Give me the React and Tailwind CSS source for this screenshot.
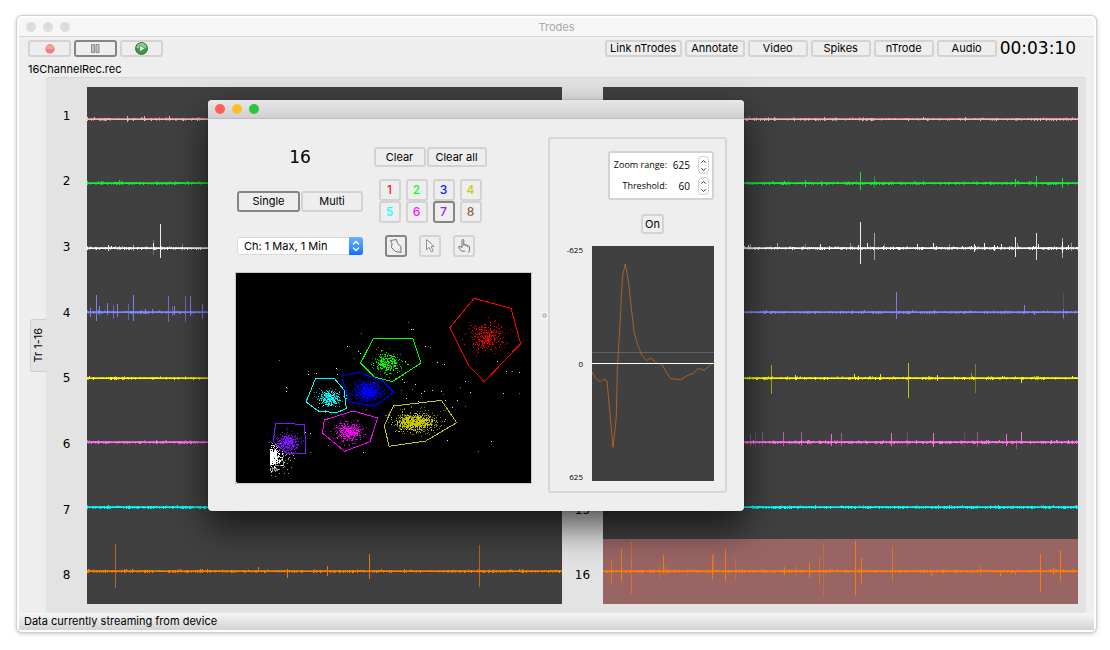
import React from 'react';

const CHANNEL_COLORS = ['#ffb4af', '#14f032', '#ffffff', '#8287ff', '#ffff00', '#ff73eb', '#00ffff', '#ff7d00'];

// each spike is [x, up, down, opacity]
const LEFT_SPIKES = [
  [[40, 3, 3], [57, 3, 2], [82, 3, 2], [110, 2, 2, 0.5]],
  [[14, 2, 2], [32, 3, 2]],
  [[21, 3, 3], [46, 3, 3, 0.6], [66, 8, 7, 0.3], [66, 5, 2], [73, 24, 10], [95, 4, 3, 0.4]],
  [
    [3, 4, 5], [9, 17, 9], [12, 6, 3], [20, 9, 3], [26, 7, 7, 0.7], [30, 8, 5], [41, 8, 8, 0.6], [46, 17, 9],
    [58, 3, 2], [65, 3, 2], [81, 16, 10, 0.8], [85, 6, 4, 0.5], [87, 6, 3], [98, 16, 10, 0.7], [103, 16, 4], [115, 8, 7],
  ],
  [],
  [],
  [],
  [[28, 27, 17, 0.7], [171, 4, 1], [200, 1, 7], [240, 5, 5], [282, 17, 8], [392, 26, 16, 0.7]],
];

const RIGHT_SPIKES = [
  [[146, 3, 1, 0.5], [221, 2, 2]],
  [[202, 3, 4], [218, 2, 3], [257, 11, 7], [271, 7, 5, 0.5], [412, 4, 4], [433, 7, 4], [459, 5, 5]],
  [
    [145, 3, 1], [147, 4, 2, 0.6], [174, 5, 2, 0.6], [202, 4, 1, 0.4], [217, 4, 1], [247, 5, 2, 0.5], [255, 3, 2],
    [257, 26, 16], [264, 5, 1], [271, 15, 12, 0.6], [281, 4, 2, 0.4], [314, 4, 1], [330, 5, 1], [346, 4, 1, 0.4],
    [371, 4, 4], [381, 5, 2], [391, 3, 3], [398, 4, 1], [412, 11, 9], [414, 5, 1, 0.5], [433, 15, 12, 0.9],
    [435, 4, 1], [459, 10, 10, 0.6], [459, 6, 5], [465, 3, 2], [468, 5, 3, 0.5],
  ],
  [[293, 20, 7], [421, 7, 2], [431, 1, 3], [460, 20, 8, 0.25], [460, 3, 6]],
  [
    [168, 13, 16, 0.6], [192, 3, 2], [251, 4, 1], [277, 4, 2], [305, 15, 20, 0.75], [334, 3, 3],
    [368, 5, 2, 0.5], [372, 14, 15, 0.35], [418, 1, 5],
  ],
  [
    [147, 8, 4, 0.5], [152, 9, 4, 0.3], [159, 10, 3, 0.5], [180, 10, 4, 0.7], [198, 10, 4, 0.6], [228, 8, 4],
    [238, 9, 4, 0.6], [288, 9, 4], [304, 10, 5, 0.3], [330, 9, 5], [361, 10, 5, 0.2], [374, 10, 5, 0.5],
    [403, 8, 4], [413, 2, 7, 0.5], [418, 10, 1],
  ],
  [],
  [
    [8, 11, 14, 0.8], [18, 23, 10], [28, 29, 23, 0.6], [56, 5, 7, 0.5], [60, 16, 3], [62, 5, 4, 0.5], [109, 16, 8],
    [110, 18, 3, 0.5], [122, 22, 10], [132, 13, 10, 0.4], [181, 4, 4], [193, 6, 7, 0.4], [206, 8, 7], [216, 14, 14, 0.7],
    [220, 29, 25, 0.4], [252, 30, 24], [258, 13, 14], [289, 24, 10, 0.8], [328, 0, 5], [377, 6, 6, 0.6],
    [397, 0, 5], [412, 0, 4], [437, 17, 21], [450, 3, 4], [457, 21, 10],
  ],
];

// channels 9-14 sit under the spike window
const LEFT_LABELS = ['1', '2', '3', '4', '5', '6', '7', '8'];
const RIGHT_LABELS = ['', '', '', '', '', '', '15', '16'];

// [name, colour, outline, centre, spread, count]
const CLUSTERS = [
  ['1', '#ff0000', '732,100 843,130 872,236 763,350 717,303 660,188', [768, 215], [23, 20], 330],
  ['2', '#00ff00', '430,220 548,220 573,294 487,350 435,337 392,294', [472, 292], [19, 14], 300],
  ['3', '#0000ff', '335,333 388,322 458,348 492,382 433,424 358,410', [413, 377], [20, 14], 680],
  ['4', '#c8c800', '490,423 634,406 680,473 587,528 477,544 463,482', [556, 470], [27, 12], 860],
  ['5', '#00ffff', '257,340 313,340 342,375 349,430 323,442 268,440 228,411', [300, 400], [16, 12], 300],
  ['6', '#ff00ff', '283,465 370,438 443,459 420,530 344,559 277,504', [353, 497], [18, 13], 420],
  ['7', '#7f14ff', '137,475 224,478 227,566 172,566 130,530', [173, 531], [16, 12], 400],
];

const LOOSE_POINTS = [
  [535, 172], [545, 193], [551, 193], [394, 205], [352, 244], [585, 244], [601, 247], [386, 258], [390, 265], [149, 286],
  [170, 368], [168, 380], [173, 371], [622, 292], [643, 298], [865, 208], [802, 290], [829, 320], [846, 320], [868, 323],
  [706, 349], [691, 368], [721, 382], [820, 385], [868, 385], [517, 343], [523, 352], [547, 373], [607, 376], [634, 379],
  [640, 388], [646, 406], [682, 406], [706, 424], [668, 427], [784, 528], [745, 559], [652, 526], [400, 562], [294, 541],
  [227, 502], [242, 505], [242, 562], [320, 309], [322, 328], [234, 319], [235, 328], [258, 325], [409, 433], [598, 409],
  [565, 408], [372, 280], [400, 350], [530, 400], [515, 375], [575, 385], [556, 358], [500, 340], [583, 378], [20, 652],
];

const UNIT_COLORS = [
  'text-[#ff1414]', 'text-[#14ff14]', 'text-[#1414ff]', 'text-[#c8c814]',
  'text-[#14ffff]', 'text-[#ff14ff]', 'text-[#8a2be2]', 'text-[#8b6239]',
];

function makeRandom(seed) {
  let s = seed;
  return () => {
    s = (s * 16807) % 2147483647;
    return s / 2147483647;
  };
}

function gauss(random) {
  return Math.sqrt(-2 * Math.log(random() + 1e-9)) * Math.cos(2 * Math.PI * random());
}

function noisePath(seed, width, center, density) {
  const random = makeRandom(seed);
  let d = '';
  for (let x = 0; x < width; x += 1) {
    const r = random();
    if (r < density) {
      const up = r < density * 0.1 ? 2 : 1;
      const down = random() < 0.5 ? 2 : 1;
      d += `M${x} ${center - up}h1v${up + down}h-1z`;
    }
  }
  return d;
}

function cloudPath(seed, [cx, cy], [sx, sy], count) {
  const random = makeRandom(seed);
  let d = '';
  for (let i = 0; i < count; i += 1) {
    const x = 18 + 3 * Math.round((cx + gauss(random) * sx - 18) / 3);
    const y = 24 + 3 * Math.round((cy + gauss(random) * sy - 24) / 3);
    d += `M${x} ${y}h3v3h-3z`;
  }
  return d;
}

// noise piled up against the left edge of the axis
function hashPath(seed, count, sx, sy, cy) {
  const random = makeRandom(seed);
  let d = '';
  for (let i = 0; i < count; i += 1) {
    const x = 120 + 3 * Math.floor(Math.abs(gauss(random) * sx) / 3);
    const y = 24 + 3 * Math.round((cy + gauss(random) * sy - 24) / 3);
    if (y < 634) d += `M${x} ${y}h3v3h-3z`;
  }
  return d;
}

const DENSITIES = [0.35, 0.55, 0.5, 0.45, 0.35, 0.6, 0.6, 0.5];

const TracePlot = ({ spikes, seed, selected, label }) => (
  <div className="my-[9px] bg-[#404040]">
    <svg className="block h-full w-full" viewBox="0 0 475 516" preserveAspectRatio="none" shapeRendering="crispEdges" role="img" aria-label={label}>
      {selected !== undefined && <rect x="0" y={selected * 64.5} width="475" height="64.5" fill="#996464" />}
      {CHANNEL_COLORS.map((color, i) => {
        const y = Math.floor(32 + i * 64.5);
        return (
          <g key={color} fill={color}>
            <path d={noisePath(seed + i * 977, 475, y, DENSITIES[i])} opacity="0.55" />
            <path d={noisePath(seed + i * 1301 + 7, 475, y, DENSITIES[i] * 0.4)} />
            <rect x="0" y={y} width="475" height="1" />
            <rect x="0" y={y - 1} width="475" height="1" opacity="0.65" />
            {spikes[i].map(([x, up, down, opacity = 1]) => (
              <rect key={`${x}-${up}`} x={x} y={y - up} width="1" height={up + down} opacity={opacity * 0.9} />
            ))}
          </g>
        );
      })}
    </svg>
  </div>
);

const ChannelLabels = ({ labels }) => (
  <ol className="my-[5px] grid grid-rows-8 text-[12px]">
    {labels.map((label, i) => (
      <li key={i} className="flex items-center justify-center">{label}</li>
    ))}
  </ol>
);

const ToolButton = ({ className = '', active, children, ...rest }) => (
  <button
    type="button"
    className={`flex items-center justify-center rounded-[3px] border-2 bg-[#eeeeee] whitespace-nowrap ${active ? 'border-[#858585]' : 'border-[#d3d3d3]'} ${className}`}
    {...rest}
  >
    {children}
  </button>
);

const RecordIcon = () => (
  <svg className="h-[10px] w-[10px]" viewBox="0 0 10 10">
    <circle cx="5" cy="5" r="4.7" fill="#f08080" />
    <path d="M0.8 4.6a4.3 4.3 0 0 1 8.4 0q-4.2 1.6-8.4 0z" fill="#f5a09c" />
  </svg>
);

const PauseIcon = () => (
  <svg className="h-[9px] w-[9px]" viewBox="0 0 9 9">
    <path d="M.5.5h3v8h-3zM5 .5h3v8h-3z" fill="#c4c4bd" stroke="#8c8c86" />
  </svg>
);

const PlayIcon = () => (
  <svg className="h-[13px] w-[13px]" viewBox="0 0 14 14">
    <circle cx="7" cy="7" r="6.4" fill="#3f9b45" stroke="#1f6b2a" />
    <path d="M1.6 6.5a5.4 5.4 0 0 1 10.8 0q-5 .4-10.8 0z" fill="#8fca90" />
    <path d="M5 3.4v7.2L11 7z" fill="#e9f7e9" stroke="#2f7d36" strokeWidth=".7" />
  </svg>
);

const PolygonIcon = () => (
  <svg className="h-4 w-4" viewBox="0 0 16 16" fill="none" stroke="#757575">
    <path d="M2.5 2.500L8.500 1.500L9.500 5.500L13 8.500L13 14.500L7.500 13.500L3.500 9.500L4 5.500Z" />
  </svg>
);

const ArrowIcon = () => (
  <svg className="h-4 w-4" viewBox="0 0 16 16" fill="#f4f4f4" stroke="#8d8d8d">
    <path d="M4.5 1.5v10.2l2.6-2.4l2.3 4.6l1.9-1l-2.3-4.4h3.2z" />
  </svg>
);

const HandIcon = () => (
  <svg className="h-4 w-4" viewBox="0 0 16 16" fill="none" stroke="#6f6f6f" strokeLinejoin="round" strokeLinecap="round">
    <path d="M6 9V2.5q0-1 .9-1t.9 1V7.5q0-1 1-1t1 1V8q0-.9.9-.9t1 .9v.6q0-.7.8-.7t1 .8v3q0 1.6-1 2.8M6 9.5L4 8.500q-1.200-.6-1.500.4q1.200 2.800 3.200 4.300h3" />
  </svg>
);

const SpinField = ({ id, label, value }) => (
  <div className="flex h-[18px] items-center justify-end">
    <label htmlFor={id} className="text-[9px] whitespace-nowrap">{label}</label>
    <input id={id} defaultValue={value} className="w-[23px] bg-white text-right text-[10px] outline-none" />
    <div className="ml-2 flex h-[18px] w-[11px] flex-col overflow-hidden rounded-[4px] border border-[#cfcfcf]">
      <button type="button" aria-label={`Increase ${label}`} className="flex flex-1 items-center justify-center">
        <svg className="h-[3px] w-[5px]" viewBox="0 0 5 3" fill="none" stroke="#333"><path d="M.4 2.6L2.5.6L4.6 2.6" /></svg>
      </button>
      <button type="button" aria-label={`Decrease ${label}`} className="flex flex-1 items-center justify-center">
        <svg className="h-[3px] w-[5px]" viewBox="0 0 5 3" fill="none" stroke="#333"><path d="M.4.4L2.5 2.4L4.6.4" /></svg>
      </button>
    </div>
  </div>
);

const ClusterPlot = () => (
  <svg
    className="mt-[15px] block w-full border border-[#c8c8c8] bg-black"
    viewBox="18 24 885 630"
    shapeRendering="crispEdges"
    role="img"
    aria-label="Peak amplitude clusters"
  >
    <g fill="#ffffff">
      <path d={hashPath(77, 340, 14, 13, 574)} />
      <path d={hashPath(191, 150, 30, 26, 588)} opacity="0.6" />
      {LOOSE_POINTS.map(([x, y], i) => (
        <rect key={`${x}-${y}`} x={x - (x % 3)} y={y - (y % 3)} width="3" height="3" opacity={i % 3 === 0 ? 0.45 : 0.9} />
      ))}
    </g>
    {CLUSTERS.map(([name, color, outline, center, spread, count], i) => (
      <g key={name} fill={color}>
        <path d={cloudPath(411 + i * 53, center, spread, Math.round(count * 0.55))} />
        <path d={cloudPath(873 + i * 71, center, spread.map((s) => s * 1.25), Math.round(count * 0.45))} opacity="0.6" />
        <polygon points={outline} fill="none" stroke={color} strokeWidth="3" />
      </g>
    ))}
  </svg>
);

const WaveformPlot = () => (
  <svg className="block h-full w-full bg-[#404040]" viewBox="0 0 122 235" preserveAspectRatio="none" role="img" aria-label="Spike waveform">
    <path d="M0 106.5H122" stroke="#636363" />
    <path
      d="M0 126L3 131.3L6 134.5L8.7 135.3L12 133.3L15 135L18 168L21 201.3L23.3 180.7L24.3 170.7L25.3 124L26.3 107L28.3 74L29.3 52.3L30.7 29L33.3 18L36.3 34L39.7 65.7L42.3 87L45.7 99L50.3 110L54.7 114.3L59 112L63.7 116.7L69.7 118L73.7 125L78.7 132.7L88.7 133.7L96.3 129L101.3 127.3L106.3 122.3L112.3 124.3L120.3 117.3"
      fill="none"
      stroke="#c46a1e"
      strokeWidth="0.8"
    />
    <path d="M0 117.5H122" stroke="#ffffff" />
  </svg>
);

const TrafficLights = ({ colors }) => (
  <div className="flex gap-[7px]">
    {colors.map((color, i) => (
      <button key={i} type="button" aria-label={['Close', 'Minimize', 'Zoom'][i]} className={`h-[10px] w-[10px] rounded-full ${color}`} />
    ))}
  </div>
);

const SpikeDialog = () => (
  <section
    aria-label="nTrode 16"
    className="absolute top-[82px] left-[189px] overflow-hidden rounded-[4px] bg-[#eeeeee] shadow-[0_0_1px_rgba(0,0,0,0.8),0_16px_36px_rgba(0,0,0,0.65)]"
  >
    <header className="flex h-[19px] items-center border-b border-[#bdbbbd] bg-linear-to-b from-[#e8e6e8] to-[#d1cfd1] px-[7px]">
      <TrafficLights colors={['bg-[#ff5f57]', 'bg-[#ffbd2e]', 'bg-[#28c940]']} />
    </header>

    <div className="flex py-[18px] pr-[17px] pl-[27px]">
      <div className="w-[297px] pt-[10px]">
        <div className="grid grid-cols-[128px_132px] items-center justify-items-center gap-y-3 pl-px">
          <h2 className="font-['DejaVu_Sans',sans-serif] text-[17px] leading-5">16</h2>
          <div className="flex gap-px">
            <ToolButton className="h-5 w-[52px]">Clear</ToolButton>
            <ToolButton className="h-5 w-[60px]">Clear all</ToolButton>
          </div>

          <div className="flex gap-px">
            <ToolButton className="h-[21px] w-[63px]" active>Single</ToolButton>
            <ToolButton className="h-[21px] w-[62px]">Multi</ToolButton>
          </div>
          <div className="grid grid-cols-4 gap-x-[5px] text-[12px] font-medium">
            {UNIT_COLORS.map((color, i) => (
              <ToolButton key={color} className={`h-[22px] w-[22px] ${color}`} active={i === 6}>{i + 1}</ToolButton>
            ))}
          </div>

          <div className="relative w-[126px]">
            <select aria-label="Channel view" className="block h-[18px] w-full appearance-none rounded-[3px] border border-[#d9d9d9] bg-white pl-[6px] leading-4">
              <option>Ch: 1 Max, 1 Min</option>
            </select>
            <span className="pointer-events-none absolute top-0 right-0 flex h-[18px] w-[14px] items-center justify-center rounded-r-[3px] bg-linear-to-b from-[#6cb3fa] to-[#0f6fff]">
              <svg className="h-3 w-2" viewBox="0 0 8 12" fill="none" stroke="#fff" strokeWidth="1.3">
                <path d="M1 4.5L4 1.5L7 4.5M1 7.5L4 10.5L7 7.5" />
              </svg>
            </span>
          </div>
          <div className="flex gap-3">
            <ToolButton className="h-[22px] w-[22px]" active aria-label="Polygon tool"><PolygonIcon /></ToolButton>
            <ToolButton className="h-[22px] w-[22px]" aria-label="Select tool"><ArrowIcon /></ToolButton>
            <ToolButton className="h-[22px] w-[22px]" aria-label="Pan tool"><HandIcon /></ToolButton>
          </div>
        </div>
        <ClusterPlot />
      </div>

      <div className="flex w-4 items-center justify-end">
        <span className="flex h-[7px] w-[7px] items-center justify-center bg-[#f8f8f8]">
          <span className="h-[5px] w-[5px] rounded-full border border-[#b5b5b5] bg-[#d2d2d2]" />
        </span>
      </div>

      <div className="flex w-[179px] flex-col rounded-[3px] border-2 border-[#d6d6d6] p-3 pr-[11px] pb-[10px] font-['Open_Sans','Noto_Sans',sans-serif]">
        <div className="flex w-[106px] flex-col gap-[3px] self-end rounded-[3px] border-2 border-[#d3d3d3] bg-white px-[3px] py-[3px]">
          <SpinField id="zoom" label="Zoom range:" value="625" />
          <SpinField id="threshold" label="Threshold:" value="60" />
        </div>
        <div className="flex justify-end pt-[14px] pr-[50px]">
          <ToolButton className="h-5 w-[23px] font-['Inter',sans-serif]">On</ToolButton>
        </div>
        <div className="mt-3 flex flex-1 gap-[9px]">
          <div className="flex flex-1 flex-col justify-between text-right text-[8px] leading-[8px]">
            <span>-625</span>
            <span>0</span>
            <span>625</span>
          </div>
          <div className="h-[235px] w-[122px]"><WaveformPlot /></div>
        </div>
      </div>
    </div>
  </section>
);

const App = () => (
  <div className="flex min-h-screen bg-white pt-4 pr-[14px] pb-[18px] pl-[17px] font-['Inter',sans-serif] text-[11px] text-black">
    <main className="relative flex flex-1 flex-col rounded-[5px] border-2 border-white bg-[#eeeeee] shadow-[0_0_1px_1px_#cfcfcf,0_1px_5px_rgba(0,0,0,0.3)]">
      <header className="grid h-[19px] grid-cols-3 items-center border-b border-[#d6d6d6] bg-[#f6f6f6] px-[7px]">
        <TrafficLights colors={['bg-[#dcdcdc]', 'bg-[#dcdcdc]', 'bg-[#dcdcdc]']} />
        <h1 className="text-center text-[#a8a8a8]">Trodes</h1>
      </header>

      <div className="flex items-center gap-[3px] pt-[3px] pr-[18px] pl-[9px]">
        <ToolButton className="h-[17px] w-[43px]" aria-label="Record"><RecordIcon /></ToolButton>
        <ToolButton className="h-[17px] w-[43px]" active aria-label="Pause"><PauseIcon /></ToolButton>
        <ToolButton className="h-[17px] w-[43px]" aria-label="Play"><PlayIcon /></ToolButton>
        <div className="flex-1" />
        <ToolButton className="h-[17px] w-[77px]">Link nTrodes</ToolButton>
        <ToolButton className="h-[17px] w-[60px]">Annotate</ToolButton>
        <ToolButton className="h-[17px] w-[60px]">Video</ToolButton>
        <ToolButton className="h-[17px] w-[60px]">Spikes</ToolButton>
        <ToolButton className="h-[17px] w-[60px]">nTrode</ToolButton>
        <ToolButton className="h-[17px] w-[60px]">Audio</ToolButton>
        <time className="font-['DejaVu_Sans',sans-serif] text-[17px] leading-[17px]">00:03:10</time>
      </div>
      <p className="px-[9px] pt-1 leading-4">16ChannelRec.rec</p>

      <div className="flex flex-1 pr-2">
        <div className="flex w-[27px] items-center justify-end">
          <button type="button" className="flex h-[53px] w-4 items-center justify-center rounded-l-[3px] border border-r-0 border-[#cfcfcf] bg-[#e3e3e3]">
            <span className="-rotate-90 whitespace-nowrap">Tr 1-16</span>
          </button>
        </div>
        <div className="grid flex-1 grid-cols-[41px_1fr_41px_1fr] rounded-[3px] border-t border-[#d8d8d8] bg-[#e3e3e3] pr-2 font-['DejaVu_Sans',sans-serif]">
          <ChannelLabels labels={LEFT_LABELS} />
          <TracePlot spikes={LEFT_SPIKES} seed={1234} label="Channels 1 to 8" />
          <ChannelLabels labels={RIGHT_LABELS} />
          <TracePlot spikes={RIGHT_SPIKES} seed={98765} selected={7} label="Channels 9 to 16" />
        </div>
      </div>

      <footer className="h-[17px] bg-linear-to-b from-[#f6f6f6] to-[#d3d3d3] px-[5px] leading-[17px]">
        Data currently streaming from device
      </footer>
      <SpikeDialog />
    </main>
  </div>
);

export default App;
